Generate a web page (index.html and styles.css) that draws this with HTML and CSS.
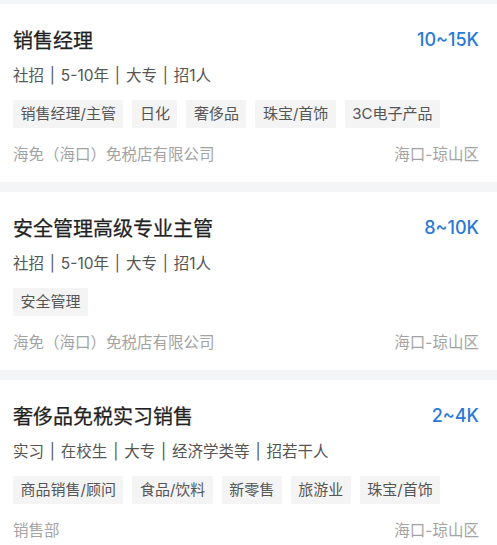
FILE: index.html
```html
<!DOCTYPE html>
<html>
	<head>
		<meta charset="UTF-8">
		<title>职位列表</title>
		<link rel="stylesheet" href="styles.css">
	</head>
	<body>
		<div class="job-list">
			<div class="job">
				<div class="job-head">
					<span class="job-name">销售经理</span>
					<span class="job-salary">10~15K</span>
				</div>
				<div class="job-meta">社招 | 5-10年 | 大专 | 招1人</div>
				<div class="job-tags">
					<span>销售经理/主管</span>
					<span>日化</span>
					<span>奢侈品</span>
					<span>珠宝/首饰</span>
					<span>3C电子产品</span>
				</div>
				<div class="job-foot">
					<span>海免（海口）免税店有限公司</span>
					<span>海口-琼山区</span>
				</div>
			</div>
			<div class="job">
				<div class="job-head">
					<span class="job-name">安全管理高级专业主管</span>
					<span class="job-salary">8~10K</span>
				</div>
				<div class="job-meta">社招 | 5-10年 | 大专 | 招1人</div>
				<div class="job-tags">
					<span>安全管理</span>
				</div>
				<div class="job-foot">
					<span>海免（海口）免税店有限公司</span>
					<span>海口-琼山区</span>
				</div>
			</div>
			<div class="job">
				<div class="job-head">
					<span class="job-name">奢侈品免税实习销售</span>
					<span class="job-salary">2~4K</span>
				</div>
				<div class="job-meta">实习 | 在校生 | 大专 | 经济学类等 | 招若干人</div>
				<div class="job-tags">
					<span>商品销售/顾问</span>
					<span>食品/饮料</span>
					<span>新零售</span>
					<span>旅游业</span>
					<span>珠宝/首饰</span>
				</div>
				<div class="job-foot">
					<span>销售部</span>
					<span>海口-琼山区</span>
				</div>
			</div>
		</div>
	</body>
</html>
```

FILE: styles.css
```css
body{
	margin: 0;
	padding: 0;
	background: #f4f5f7;
	font-family: Inter, "Noto Sans CJK SC", sans-serif;
}

.job-list{
	display: flex;
	flex-direction: column;
	gap: 10px;
	padding-top: 4px;
}
.job{
	background: #fff;
	padding: 21px 18px 16px 13px;
}
.job-head{
	display: flex;
	justify-content: space-between;
	align-items: center;
	height: 28px;
}
.job-name{
	font-size: 20px;
	font-weight: 400;
	-webkit-text-stroke: 0.25px #222;
	color: #222;
}
.job-salary{
	font-size: 18px;
	font-weight: 500;
	color: #2a7ad6;
}
.job-meta{
	margin-top: 12px;
	font-size: 15.5px;
	line-height: 22px;
	word-spacing: 1.5px;
	color: #555;
}
.job-tags{
	display: flex;
	flex-wrap: wrap;
	gap: 9px;
	margin-top: 13px;
}
.job-tags span{
	height: 28px;
	line-height: 28px;
	padding: 0 7.5px;
	font-size: 15px;
	color: #555;
	background: #f4f4f5;
	border-radius: 2px;
}
.job-foot{
	display: flex;
	justify-content: space-between;
	margin-top: 16px;
	font-size: 15.5px;
	line-height: 22px;
	color: #a3a3a3;
}
```
